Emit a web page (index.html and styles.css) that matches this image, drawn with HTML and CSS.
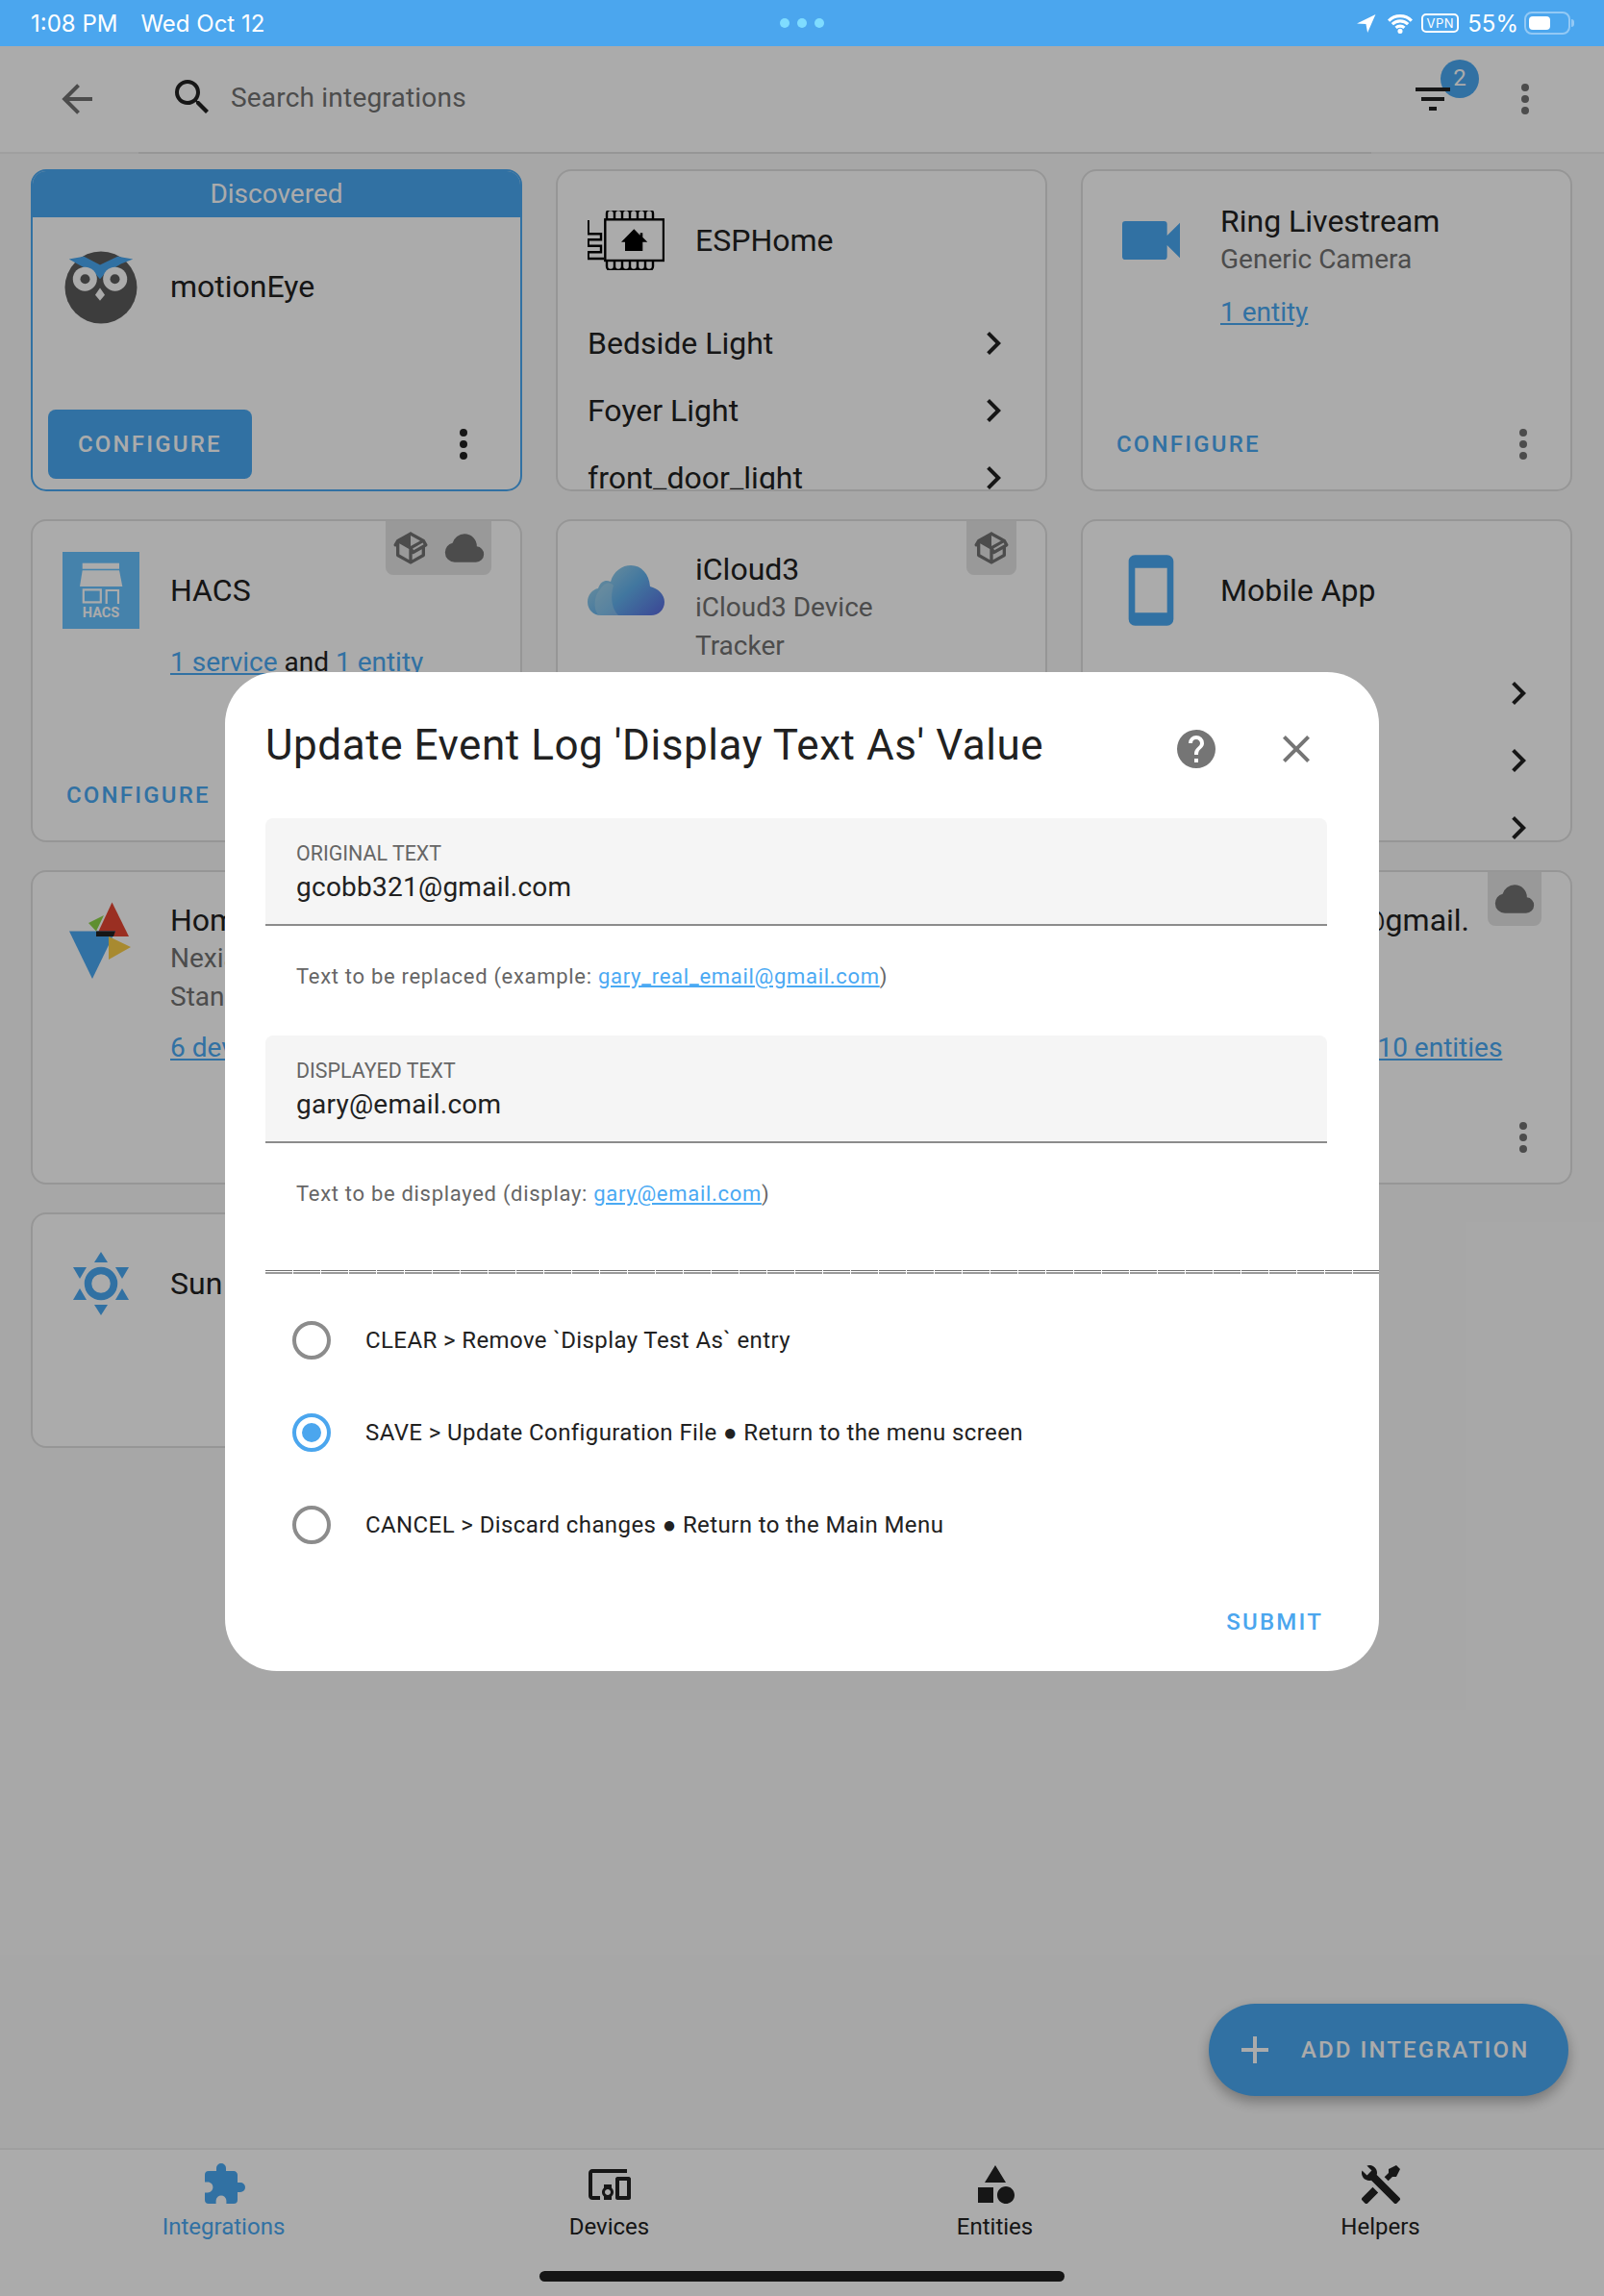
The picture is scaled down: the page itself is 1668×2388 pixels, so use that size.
FILE: index.html
```html
<!DOCTYPE html>
<html lang="en">
<head>
  <meta charset="UTF-8" />
  <meta name="viewport" content="width=device-width, initial-scale=1.0" />
  <title>Integrations</title>
  <link rel="stylesheet" href="styles.css">
</head>
<body>
  <div class="page">
    <div class="status">
      <span class="status-time">1:08 PM</span>
      <span class="status-date">Wed Oct 12</span>
      <div class="status-dots"><i></i><i></i><i></i></div>
      <div class="status-right">
        <svg class="st-arrow" viewBox="0 0 18 17"><polygon points="17.5,0 0,8.5 8.5,9 10,17" fill="#fff"/></svg>
        <svg class="st-wifi" viewBox="0 0 28 20"><path d="M2.7 7.2a16 16 0 0 1 22.6 0M6.2 10.7a11 11 0 0 1 15.6 0M9.8 14.2a6 6 0 0 1 8.4 0" fill="none" stroke="#fff" stroke-width="3"/><circle cx="14" cy="17.5" r="2.4" fill="#fff"/></svg>
        <span class="st-vpn">VPN</span>
        <span class="st-pct">55%</span>
        <span class="st-batt"><i></i></span>
        <span class="st-nub"></span>
      </div>
    </div>

    <div class="header">
      <svg class="icon back" viewBox="0 0 24 24"><path d="M20,11V13H8L13.5,18.5L12.08,19.92L4.16,12L12.08,4.08L13.5,5.5L8,11H20Z"/></svg>
      <div class="search">
        <svg class="icon" viewBox="0 0 24 24"><path d="M9.5,3A6.5,6.5 0 0,1 16,9.5C16,11.11 15.41,12.59 14.44,13.73L14.71,14H15.5L20.5,19L19,20.5L14,15.5V14.71L13.73,14.44C12.59,15.41 11.11,16 9.5,16A6.5,6.5 0 0,1 3,9.5A6.5,6.5 0 0,1 9.5,3M9.5,5C7,5 5,7 5,9.5C5,12 7,14 9.5,14C12,14 14,12 14,9.5C14,7 12,5 9.5,5Z"/></svg>
        <span>Search integrations</span>
      </div>
      <div class="filter">
        <span class="filter-badge">2</span>
        <svg class="icon" viewBox="0 0 24 24"><path d="M6,13H18V11H6M3,6V8H21V6M10,18H14V16H10V18Z"/></svg>
      </div>
      <svg class="icon dots grey" viewBox="0 0 24 24"><use href="#dots"/></svg>
    </div>

    <div class="grid">
      <div class="card discovered">
        <div class="card-top">Discovered</div>
        <div class="card-head">
          <div class="logo">
            <svg width="80" height="84" viewBox="0 0 80 84"><circle cx="40" cy="43" r="37.5" fill="#5c5c5c"/><polygon points="6.7,13.5 22.3,10.8 39,19.5 57.3,10.8 73.3,13.5 60.7,18.5 44,28.5 39,34.2 34,28.5 17.3,19.5" fill="#4aa9f3"/><circle cx="23.3" cy="34.2" r="12.5" fill="#fff"/><circle cx="54.7" cy="34.2" r="12.5" fill="#fff"/><circle cx="23.5" cy="34.2" r="5" fill="#5c5c5c"/><circle cx="54.5" cy="34.2" r="5" fill="#5c5c5c"/><polygon points="39,43.5 44,50.8 39,56.8 34,50.8" fill="#fff"/></svg>
          </div>
          <div class="titles"><div class="name">motionEye</div></div>
        </div>
        <div class="actions">
          <span class="btn-fill">CONFIGURE</span>
          <svg class="icon dark" viewBox="0 0 24 24"><use href="#dots"/></svg>
        </div>
      </div>

      <div class="card">
        <div class="card-head">
          <div class="logo">
            <svg width="80" height="62" viewBox="11 14 80 62" fill="none" stroke="#000" stroke-width="2.4"><rect x="29.3" y="23.3" width="60.7" height="42.7"/><path d="M31 23V17a4 4 0 0 1 8 0v6m0-6a4 4 0 0 1 8 0v6m0-6a4 4 0 0 1 8 0v6m0-6a4 4 0 0 1 8 0v6m0-6a4 4 0 0 1 8 0v6m0-6a4 4 0 0 1 8 0v6"/><path d="M31 66v6a4 4 0 0 0 8 0v-6m0 6a4 4 0 0 0 8 0v-6m0 6a4 4 0 0 0 8 0v-6m0 6a4 4 0 0 0 8 0v-6m0 6a4 4 0 0 0 8 0v-6m0 6a4 4 0 0 0 8 0v-6"/><polyline points="11.7,24 11.7,38.3 25,38.3 25,44.3 11.7,44.3 11.7,50.7 25,50.7 25,57.3 11.7,57.3 11.7,64 28,64"/><polygon points="59.3,33.3 46,46.7 50,46.7 50,56 68.3,56 68.3,46.7 73.3,46.7 68.3,41.7 68.3,37.3 65.7,37.3 65.7,39.7" fill="#000" stroke="none"/></svg>
          </div>
          <div class="titles"><div class="name">ESPHome</div></div>
        </div>
        <div class="rows">
          <div class="row"><span>Bedside Light</span><svg class="icon dark" viewBox="0 0 24 24"><use href="#chev"/></svg></div>
          <div class="row"><span>Foyer Light</span><svg class="icon dark" viewBox="0 0 24 24"><use href="#chev"/></svg></div>
          <div class="row"><span>front_door_light</span><svg class="icon dark" viewBox="0 0 24 24"><use href="#chev"/></svg></div>
        </div>
      </div>

      <div class="card">
        <div class="card-head">
          <div class="logo">
            <svg class="blue" width="80" height="80" viewBox="0 0 24 24"><path d="M17,10.5V7A1,1 0 0,0 16,6H4A1,1 0 0,0 3,7V17A1,1 0 0,0 4,18H16A1,1 0 0,0 17,17V13.5L21,17.5V6.5L17,10.5Z"/></svg>
          </div>
          <div class="titles">
            <div class="name">Ring Livestream</div>
            <div class="sub">Generic Camera</div>
          </div>
        </div>
        <div class="links"><a>1 entity</a></div>
        <div class="actions">
          <span class="btn-flat">CONFIGURE</span>
          <svg class="icon grey" viewBox="0 0 24 24"><use href="#dots"/></svg>
        </div>
      </div>

      <div class="card">
        <div class="badges">
          <svg class="icon-box" viewBox="0 0 24 24"><use href="#box"/></svg>
          <svg class="icon-cloud" viewBox="0 0 24 24"><use href="#cloud"/></svg>
        </div>
        <div class="card-head">
          <div class="logo">
            <svg width="80" height="80" viewBox="0 0 80 80"><rect width="80" height="80" fill="#68c2ff"/><g fill="#fff"><rect x="20.7" y="11.7" width="38.3" height="6"/><polygon points="20.7,19.3 59,19.3 62.3,36 18,36"/><text x="40" y="68" class="hacs-text">HACS</text></g><g fill="none" stroke="#fff" stroke-width="2.2"><rect x="21.8" y="39.4" width="18" height="13"/><path d="M45.7 54V40H58V54"/></g></svg>
          </div>
          <div class="titles"><div class="name">HACS</div></div>
        </div>
        <div class="links"><a>1 service</a> and <a>1 entity</a></div>
        <div class="actions">
          <span class="btn-flat">CONFIGURE</span>
          <svg class="icon grey" viewBox="0 0 24 24"><use href="#dots"/></svg>
        </div>
      </div>

      <div class="card">
        <div class="badges">
          <svg class="icon-box" viewBox="0 0 24 24"><use href="#box"/></svg>
        </div>
        <div class="card-head">
          <div class="logo">
            <svg width="80" height="56" viewBox="0 0 80 56"><defs><linearGradient id="icloud" x1="0" y1="0.2" x2="1" y2="0.9"><stop offset="0" stop-color="#a8d8ea"/><stop offset="0.5" stop-color="#62b2ee"/><stop offset="1" stop-color="#5a6ee0"/></linearGradient></defs><path d="M14 54C6 54 0 48 0 40C0 33 5 27 11 26C14 18 19 17 24 19C27 8 36 2 45 2C56 2 64 11 65 24C73 26 80 32 80 40C80 48 74 54 66 54Z" fill="url(#icloud)"/><path d="M12 54C6 50 6 34 13 27C17 20 23 18 27 23C24 32 24 46 32 54Z" fill="#bfe3f0" opacity="0.35"/></svg>
          </div>
          <div class="titles">
            <div class="name">iCloud3</div>
            <div class="sub">iCloud3 Device<br>Tracker</div>
          </div>
        </div>
      </div>

      <div class="card">
        <div class="card-head">
          <div class="logo">
            <svg class="blue" width="80" height="80" viewBox="0 0 24 24"><path d="M17,19H7V5H17M17,1H7C5.89,1 5,1.89 5,3V21A2,2 0 0,0 7,23H17A2,2 0 0,0 19,21V3C19,1.89 18.1,1 17,1Z"/></svg>
          </div>
          <div class="titles"><div class="name">Mobile App</div></div>
        </div>
        <div class="rows">
          <div class="row"><span></span><svg class="icon dark" viewBox="0 0 24 24"><use href="#chev"/></svg></div>
          <div class="row"><span></span><svg class="icon dark" viewBox="0 0 24 24"><use href="#chev"/></svg></div>
          <div class="row"><span></span><svg class="icon dark" viewBox="0 0 24 24"><use href="#chev"/></svg></div>
        </div>
      </div>

      <div class="card">
        <div class="card-head">
          <div class="logo">
            <svg width="80" height="84" viewBox="0 0 80 84"><polygon points="51.5,1.6 69,37 35,37" fill="#e64633"/><polygon points="7,31.6 55,31.6 31,81" fill="#4aa9f3"/><polygon points="27,23 43,15 35,31.6" fill="#8ed548"/><polygon points="48,37 71,48 48,61" fill="#fbce48"/><polygon points="35,31.6 55,31.6 53,37 35,37" fill="#222"/></svg>
          </div>
          <div class="titles">
            <div class="name">Home</div>
            <div class="sub">Nexia/American<br>Standard/Trane</div>
          </div>
        </div>
        <div class="links"><a>6 devices</a></div>
      </div>

      <div class="card">
      </div>

      <div class="card">
        <div class="badges">
          <svg class="icon-cloud" viewBox="0 0 24 24"><use href="#cloud"/></svg>
        </div>
        <div class="card-head">
          <div class="logo"></div>
          <div class="titles titles-tall"><div class="name">gcobb321@gmail.<br>com</div></div>
        </div>
        <div class="links"><a>1 device</a> and <a>10 entities</a></div>
        <div class="actions actions-end">
          <svg class="icon grey" viewBox="0 0 24 24"><use href="#dots"/></svg>
        </div>
      </div>

      <div class="card">
        <div class="card-head">
          <div class="logo">
            <svg width="80" height="84" viewBox="0 0 80 84" fill="#4aa9f3"><polygon points="40,9 47,20 33,20"/><polygon points="40,75 47,64 33,64"/><polygon points="69,25 55,25 62,37"/><polygon points="11,25 25,25 18,37"/><polygon points="69,59 55,59 62,47"/><polygon points="11,59 25,59 18,47"/><circle cx="40" cy="42" r="13.5" fill="none" stroke="#4aa9f3" stroke-width="7.5"/></svg>
          </div>
          <div class="titles"><div class="name">Sun</div></div>
        </div>
      </div>
    </div>

    <div class="footer">
      <div class="tabs">
        <div class="tab active">
          <svg class="icon" viewBox="0 0 24 24"><path d="M20.5,11H19V7C19,5.89 18.1,5 17,5H13V3.5A2.5,2.5 0 0,0 10.5,1A2.5,2.5 0 0,0 8,3.5V5H4A2,2 0 0,0 2,7V10.8H3.5C5,10.8 6.2,12 6.2,13.5C6.2,15 5,16.2 3.5,16.2H2V20A2,2 0 0,0 4,22H7.8V20.5C7.8,19 9,17.8 10.5,17.8C12,17.8 13.2,19 13.2,20.5V22H17A2,2 0 0,0 19,20V16H20.5A2.5,2.5 0 0,0 23,13.5A2.5,2.5 0 0,0 20.5,11Z"/></svg>
          <span>Integrations</span>
        </div>
        <div class="tab">
          <svg class="icon" viewBox="0 0 24 24"><path d="M3 6H21V4H3C1.9 4 1 4.9 1 6V18C1 19.1 1.9 20 3 20H7V18H3V6M13 12H9V13.78C8.39 14.33 8 15.11 8 16C8 16.89 8.39 17.67 9 18.22V20H13V18.22C13.61 17.67 14 16.88 14 16S13.61 14.33 13 13.78V12M11 17.5C10.17 17.5 9.5 16.83 9.5 16S10.17 14.5 11 14.5 12.5 15.17 12.5 16 11.83 17.5 11 17.5M22 8H16C15.5 8 15 8.5 15 9V19C15 19.5 15.5 20 16 20H22C22.5 20 23 19.5 23 19V9C23 8.5 22.5 8 22 8M21 18H17V10H21V18Z"/></svg>
          <span>Devices</span>
        </div>
        <div class="tab">
          <svg class="icon" viewBox="0 0 24 24"><path d="M11,13.5V21.5H3V13.5H11M12,2L17.5,11H6.5L12,2M17.5,13C20,13 22,15 22,17.5C22,20 20,22 17.5,22C15,22 13,20 13,17.5C13,15 15,13 17.5,13Z"/></svg>
          <span>Entities</span>
        </div>
        <div class="tab">
          <svg class="icon" viewBox="0 0 24 24"><path d="M21.71 20.29L20.29 21.71A1 1 0 0 1 18.88 21.71L7 9.85A3.81 3.81 0 0 1 6 10A4 4 0 0 1 2.22 4.7L4.76 7.24L5.29 6.71L6.71 5.29L7.24 4.76L4.7 2.22A4 4 0 0 1 10 6A3.81 3.81 0 0 1 9.85 7L21.71 18.88A1 1 0 0 1 21.71 20.29M2.29 18.88A1 1 0 0 0 2.29 20.29L3.71 21.71A1 1 0 0 0 5.12 21.71L10.59 16.25L7.76 13.42M20 2L16 4V6L13.83 8.17L15.83 10.17L18 8H20L22 4Z"/></svg>
          <span>Helpers</span>
        </div>
      </div>
      <div class="home-bar"></div>
    </div>

    <div class="fab">
      <svg class="icon" viewBox="0 0 24 24"><path d="M19,13H13V19H11V13H5V11H11V5H13V11H19V13Z"/></svg>
      <span>ADD INTEGRATION</span>
    </div>

    <div class="scrim">
      <div class="dialog">
        <div class="dialog-head">
          <h2>Update Event Log 'Display Text As' Value</h2>
          <svg class="icon help" viewBox="0 0 24 24"><path d="M15.07,11.25L14.17,12.17C13.45,12.89 13,13.5 13,15H11V14.5C11,13.39 11.45,12.39 12.17,11.67L13.41,10.41C13.78,10.05 14,9.55 14,9C14,7.89 13.1,7 12,7A2,2 0 0,0 10,9H8A4,4 0 0,1 12,5A4,4 0 0,1 16,9C16,9.88 15.64,10.67 15.07,11.25M13,19H11V17H13M12,2A10,10 0 0,0 2,12A10,10 0 0,0 12,22A10,10 0 0,0 22,12C22,6.47 17.5,2 12,2Z"/></svg>
          <svg class="icon close" viewBox="0 0 24 24"><path d="M19,6.41L17.59,5L12,10.59L6.41,5L5,6.41L10.59,12L5,17.59L6.41,19L12,13.41L17.59,19L19,17.59L13.41,12L19,6.41Z"/></svg>
        </div>

        <div class="field">
          <div class="field-label">ORIGINAL TEXT</div>
          <div class="field-value">gcobb321@gmail.com</div>
        </div>
        <div class="help-text">Text to be replaced (example: <a>gary_real_email@gmail.com</a>)</div>

        <div class="field">
          <div class="field-label">DISPLAYED TEXT</div>
          <div class="field-value">gary@email.com</div>
        </div>
        <div class="help-text help-last">Text to be displayed (display: <a>gary@email.com</a>)</div>

        <div class="sep"></div>

        <div class="radios">
          <div class="radio-row"><span class="radio"></span><span>CLEAR &gt; Remove `Display Test As` entry</span></div>
          <div class="radio-row"><span class="radio checked"></span><span>SAVE &gt; Update Configuration File ● Return to the menu screen</span></div>
          <div class="radio-row"><span class="radio"></span><span>CANCEL &gt; Discard changes ● Return to the Main Menu</span></div>
        </div>

        <div class="dialog-actions"><span>SUBMIT</span></div>
      </div>
    </div>
  </div>

  <svg class="defs" width="0" height="0">
    <defs>
      <path id="dots" d="M12,16A2,2 0 0,1 14,18A2,2 0 0,1 12,20A2,2 0 0,1 10,18A2,2 0 0,1 12,16M12,10A2,2 0 0,1 14,12A2,2 0 0,1 12,14A2,2 0 0,1 10,12A2,2 0 0,1 12,10M12,4A2,2 0 0,1 14,6A2,2 0 0,1 12,8A2,2 0 0,1 10,6A2,2 0 0,1 12,4Z"/>
      <path id="chev" d="M8.59,16.58L13.17,12L8.59,7.41L10,6L16,12L10,18L8.59,16.58Z"/>
      <path id="cloud" d="M6.5 20Q4.22 20 2.61 18.43 1 16.85 1 14.58 1 12.63 2.17 11.1 3.35 9.57 5.25 9.15 5.88 6.85 7.75 5.43 9.63 4 12 4 14.93 4 16.96 6.04 19 8.07 19 11 20.73 11.2 21.86 12.5 23 13.78 23 15.5 23 17.38 21.69 18.69 20.38 20 18.5 20Z"/>
      <path id="box" d="M2,10.96C1.5,10.68 1.35,10.07 1.63,9.59L3.13,7C3.24,6.8 3.41,6.66 3.6,6.58L11.43,2.18C11.59,2.06 11.79,2 12,2C12.21,2 12.41,2.06 12.57,2.18L20.47,6.62C20.66,6.72 20.82,6.88 20.91,7.08L22.36,9.6C22.64,10.08 22.47,10.69 22,10.96L21,11.54V16.5C21,16.88 20.79,17.21 20.47,17.38L12.57,21.82C12.41,21.94 12.21,22 12,22C11.79,22 11.59,21.94 11.43,21.82L3.53,17.38C3.21,17.21 3,16.88 3,16.5V10.96C2.7,11.13 2.32,11.14 2,10.96M12,4.15V4.15L12,10.85V10.85L17.96,7.5L12,4.15M5,15.91L11,19.29V12.58L5,9.21V15.91M19,15.91V12.69L14,15.59C13.67,15.77 13.3,15.76 13,15.6V19.29L19,15.91M13.85,13.36L20.13,9.73L19.55,8.72L13.27,12.35L13.85,13.36Z"/>
    </defs>
  </svg>
</body>
</html>
```

FILE: styles.css
```css
body {
  margin: 0;
  font-family: Roboto, "Liberation Sans", sans-serif;
  color: #212121;
  background-color: #fafafa;
}

a {
  color: #4aa9f3;
  text-decoration: underline;
}

.defs {
  position: absolute;
}

.page {
  position: relative;
  display: flex;
  flex-direction: column;
  height: 2388px;
  overflow: hidden;
}

.icon {
  display: block;
  flex: none;
  width: 48px;
  height: 48px;
  fill: #212121;
}

.icon.grey {
  fill: #727272;
}

.icon.dark {
  fill: #212121;
}

.blue {
  fill: #4aa9f3;
}

/* status bar */
.status {
  position: relative;
  z-index: 2;
  display: flex;
  align-items: center;
  flex: none;
  height: 48px;
  padding: 0 32px;
  box-sizing: border-box;
  background-color: #4ba6ee;
  color: #fff;
  font-family: Inter, Roboto, sans-serif;
  font-size: 24px;
}

.status-date {
  margin-left: 24px;
}

.status-dots {
  position: absolute;
  left: 811px;
  top: 19px;
  display: flex;
  gap: 8px;
}

.status-dots i {
  width: 10px;
  height: 10px;
  border-radius: 50%;
  background-color: #7fdcff;
}

.status-right {
  display: flex;
  align-items: center;
  margin-left: auto;
  margin-right: -1px;
}

.st-arrow {
  width: 20px;
  height: 19px;
  margin-right: 10px;
}

.st-wifi {
  width: 30px;
  height: 21px;
  margin-right: 7px;
}

.st-vpn {
  width: 39px;
  height: 20px;
  box-sizing: border-box;
  border: 2px solid #fff;
  border-radius: 5px;
  font-size: 13px;
  line-height: 16px;
  letter-spacing: 0.5px;
  text-align: center;
}

.st-pct {
  margin-left: 9px;
}

.st-batt {
  display: block;
  width: 48px;
  height: 24px;
  margin-left: 6px;
  padding: 3px;
  box-sizing: border-box;
  border: 2px solid rgba(255, 255, 255, 0.4);
  border-radius: 8px;
}

.st-batt i {
  display: block;
  width: 22px;
  height: 14px;
  border-radius: 4px;
  background-color: #fff;
}

.st-nub {
  width: 3px;
  height: 8px;
  margin-left: 1px;
  border-radius: 0 3px 3px 0;
  background-color: rgba(255, 255, 255, 0.4);
}

/* toolbar */
.header {
  display: flex;
  align-items: center;
  flex: none;
  height: 112px;
  padding: 0 58px 0 56px;
  box-sizing: border-box;
  background-color: #fff;
  border-bottom: 2px solid #eeeeee;
}

.back {
  fill: #727272;
}

.search {
  display: flex;
  align-items: center;
  gap: 16px;
  flex: 1;
  align-self: stretch;
  margin: 0 40px;
  padding: 0 32px 4px;
  border-bottom: 2px solid #e0e0e0;
  margin-bottom: -2px;
  font-size: 28px;
  letter-spacing: 0.2px;
  color: #727272;
}

.search .icon {
  fill: #212121;
}

.filter {
  position: relative;
}

.filter-badge {
  position: absolute;
  left: 32px;
  top: -17px;
  width: 40px;
  height: 40px;
  border-radius: 50%;
  background-color: #4aa9f3;
  color: #fff;
  font-size: 24px;
  line-height: 38px;
  text-align: center;
}

.filter .icon {
  position: relative;
}

.dots {
  margin-left: 48px;
}

/* integration cards */
.grid {
  display: grid;
  grid-template-columns: repeat(3, 511px);
  grid-template-rows: 335px 336px 327px 245px;
  gap: 29px 35px;
  padding: 16px 32px 0;
  flex: 1;
}

.card {
  position: relative;
  display: flex;
  flex-direction: column;
  overflow: hidden;
  box-sizing: border-box;
  border: 2px solid #e0e0e0;
  border-radius: 16px;
  background-color: #fff;
}

.discovered {
  border-color: #4aa9f3;
}

.card-top {
  height: 48px;
  background-color: #4aa9f3;
  color: #fff;
  font-size: 28px;
  line-height: 48px;
  text-align: center;
}

.card-head {
  display: flex;
  flex: none;
  padding: 30px 16px 0 31px;
}

.logo {
  display: flex;
  align-items: center;
  justify-content: center;
  flex: none;
  width: 80px;
  height: 84px;
}

.titles {
  display: flex;
  flex-direction: column;
  justify-content: center;
  min-height: 80px;
  margin-left: 32px;
}

.titles-tall {
  justify-content: flex-start;
  min-height: 120px;
}

.name {
  font-size: 32px;
  line-height: 40px;
  color: #212121;
}

.sub {
  font-size: 28px;
  line-height: 40px;
  color: #727272;
}

.links {
  margin-top: 13px;
  padding-left: 143px;
  font-size: 28px;
  line-height: 40px;
}

.actions {
  display: flex;
  align-items: center;
  justify-content: space-between;
  height: 72px;
  margin-top: auto;
  margin-bottom: 11px;
  padding-left: 16px;
  padding-right: 25px;
}

.actions-end {
  justify-content: flex-end;
}

.discovered .actions {
  padding-right: 35px;
}

.btn-fill,
.btn-flat {
  font-size: 24px;
  font-weight: 500;
  letter-spacing: 2.2px;
}

.btn-fill {
  height: 72px;
  padding: 0 31px;
  border-radius: 8px;
  background-color: #4aa9f3;
  color: #fff;
  line-height: 72px;
}

.btn-flat {
  padding: 0 19px;
  color: #4aa9f3;
}

.rows {
  margin-top: 30px;
  padding: 0 30px 0 31px;
}

.row {
  display: flex;
  align-items: center;
  justify-content: space-between;
  height: 70px;
  font-size: 32px;
}

.badges {
  position: absolute;
  top: 0;
  right: 30px;
  display: flex;
  align-items: center;
  gap: 14px;
  height: 56px;
  padding: 0 6px;
  border-radius: 0 0 8px 8px;
  background-color: rgba(0, 0, 0, 0.105);
}

.icon-box {
  width: 40px;
  height: 40px;
  fill: #727272;
}

.icon-cloud {
  width: 44px;
  height: 44px;
  fill: #727272;
}

.hacs-text {
  font-size: 14.5px;
  font-weight: 700;
  text-anchor: middle;
}

/* bottom tabs */
.footer {
  flex: none;
  height: 154px;
  box-sizing: border-box;
  background-color: #fff;
  border-top: 2px solid #eeeeee;
}

.tabs {
  display: grid;
  grid-template-columns: repeat(4, 401px);
  height: 126px;
  padding: 0 32px;
}

.tab {
  display: flex;
  flex-direction: column;
  align-items: center;
  padding-top: 12px;
  font-size: 24px;
  line-height: 32px;
}

.tab span {
  margin-top: 4px;
}

.tab.active {
  color: #4aa9f3;
}

.tab.active .icon {
  fill: #4aa9f3;
}

.home-bar {
  width: 546px;
  height: 11px;
  margin: 0 auto;
  border-radius: 6px;
  background-color: #202020;
}

.fab {
  position: absolute;
  right: 37px;
  bottom: 208px;
  display: flex;
  align-items: center;
  width: 374px;
  height: 96px;
  padding-left: 24px;
  box-sizing: border-box;
  border-radius: 48px;
  background-color: #4aa9f3;
  color: #fff;
  font-size: 24px;
  font-weight: 500;
  letter-spacing: 2.1px;
  box-shadow: 0 6px 14px rgba(0, 0, 0, 0.3);
}

.fab .icon {
  fill: #fff;
  margin-right: 24px;
}

/* dialog */
.scrim {
  position: absolute;
  top: 48px;
  left: 0;
  right: 0;
  bottom: 0;
  display: flex;
  align-items: center;
  justify-content: center;
  background-color: rgba(0, 0, 0, 0.33);
}

.dialog {
  width: 1200px;
  height: 1039px;
  padding: 0 54px 0 42px;
  box-sizing: border-box;
  border-radius: 54px;
  background-color: #fff;
}

.dialog-head {
  display: flex;
  align-items: flex-start;
  height: 152px;
}

.dialog-head h2 {
  flex: 1;
  margin: 50px 0 0;
  font-size: 44px;
  font-weight: 400;
  line-height: 52px;
  letter-spacing: 0.55px;
  color: #212121;
}

.help {
  margin-top: 56px;
  fill: #757575;
}

.close {
  margin: 56px 8px 0 56px;
  fill: #757575;
}

.field {
  height: 112px;
  padding: 22px 32px 0;
  box-sizing: border-box;
  border-bottom: 2px solid #8c8c8c;
  border-radius: 8px 8px 0 0;
  background-color: #f5f5f5;
}

.field-label {
  font-size: 21.4px;
  line-height: 30px;
  color: #666;
}

.field-value {
  margin-top: 2px;
  font-size: 28px;
  line-height: 36px;
  letter-spacing: 0.25px;
  color: #212121;
}

.help-text {
  height: 114px;
  padding: 37px 32px 0;
  box-sizing: border-box;
  font-size: 22px;
  line-height: 32px;
  letter-spacing: 0.7px;
  color: #666;
}

.help-last {
  height: 132px;
}

.sep {
  height: 5px;
  margin-right: -54px;
  background:
    repeating-linear-gradient(90deg, transparent 0 28px, #fff 28px 29px),
    linear-gradient(#6e6e6e 0 1px, #fff 1px 2px, #9a9a9a 2px 4px, #fff 4px);
}

.radios {
  margin-top: 20px;
}

.radio-row {
  display: flex;
  align-items: center;
  height: 96px;
  padding-left: 28px;
  font-size: 24px;
  letter-spacing: 0.4px;
  color: #212121;
}

.radio {
  flex: none;
  width: 40px;
  height: 40px;
  margin-right: 36px;
  box-sizing: border-box;
  border: 4px solid #8c8c8c;
  border-radius: 50%;
}

.radio.checked {
  padding: 6px;
  border-color: #4ba6ee;
  background-color: #4ba6ee;
  background-clip: content-box;
}

.dialog-actions {
  padding-top: 36px;
  padding-right: 4px;
  text-align: right;
  font-size: 24px;
  font-weight: 500;
  line-height: 34px;
  letter-spacing: 2.2px;
  color: #4ba6ee;
}
```
